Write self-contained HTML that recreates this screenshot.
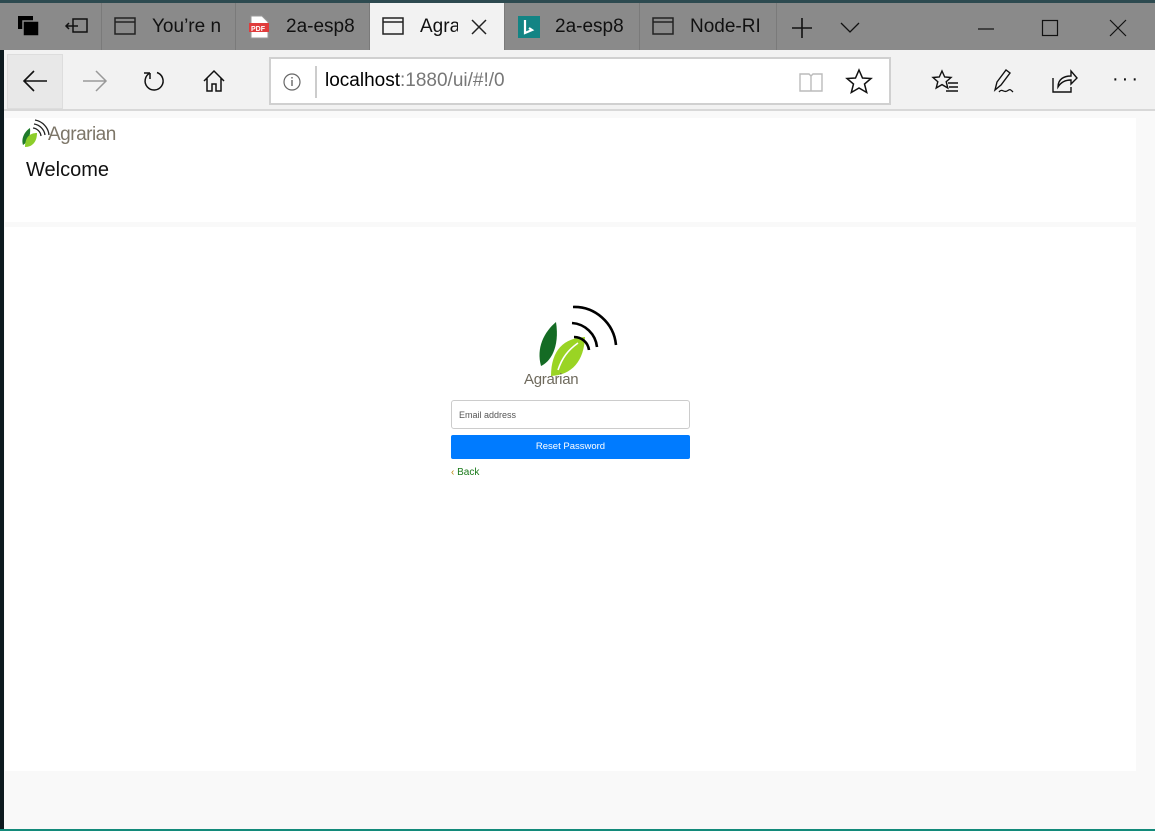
<!DOCTYPE html>
<html><head><meta charset="utf-8"><style>
*{box-sizing:border-box;margin:0;padding:0}
body{width:1155px;height:831px;overflow:hidden;position:relative;background:#f9f9f9;font-family:"Liberation Sans",sans-serif}
.abs{position:absolute}
.tabbar{left:0;top:0;width:1155px;height:50px;background:#8a8a8a}
.tab{top:3px;height:47px;border-right:1px solid #7a7a7a;color:#111;font-size:19px;line-height:47px}
.toolbar{left:4px;top:50px;width:1151px;height:61px;background:#f2f2f2;border-bottom:2px solid #d8d8d8}
svg{position:absolute;overflow:visible}
</style></head><body>
<div class="abs" style="left:0;top:0;width:4px;height:831px;background:#0d1a1f"></div>
<div class="abs tabbar"></div>
<div class="abs" style="left:0;top:0;width:1155px;height:3px;background:#2d4a50"></div>
<svg style="left:18px;top:16px" width="24" height="24"><rect x="0" y="0" width="15" height="13" fill="#000"/><rect x="5" y="5" width="16" height="15" fill="#000" stroke="#8a8a8a" stroke-width="1.5"/></svg>
<svg style="left:64px;top:18px" width="26" height="18"><rect x="9" y="1" width="14" height="13" fill="none" stroke="#111" stroke-width="1.5"/><path d="M2 8h12M5 5l-3 3 3 3" fill="none" stroke="#111" stroke-width="1.5"/></svg>
<div class="abs tab" style="left:101px;width:135px;border-left:1px solid #7a7a7a"><svg style="left:12px;top:14px" width="22" height="18"><rect x="1" y="1" width="20" height="16" fill="none" stroke="#222" stroke-width="1.5"/><path d="M1 5h20" stroke="#222" stroke-width="1.5"/></svg><span style="position:absolute;left:50px">You’re n</span></div>
<div class="abs tab" style="left:236px;width:134px"><svg style="left:12px;top:12px" width="22" height="24"><path d="M3 1h11l6 6v16H3z" fill="#fff" stroke="#999"/><rect x="1" y="8" width="20" height="9" fill="#e03c3c"/><text x="3" y="16" font-size="7" fill="#fff" font-weight="bold" font-family="Liberation Sans">PDF</text></svg><span style="position:absolute;left:50px">2a-esp8</span></div>
<div class="abs tab" style="left:370px;width:135px;background:#f2f2f2;top:3px;height:48px"><svg style="left:12px;top:14px" width="22" height="18"><rect x="1" y="1" width="20" height="16" fill="none" stroke="#222" stroke-width="1.5"/><path d="M1 5h20" stroke="#222" stroke-width="1.5"/></svg><span style="position:absolute;left:50px;width:38px;overflow:hidden">Agrarian</span><svg style="left:101px;top:16px" width="16" height="16"><path d="M1 1l14 14M15 1L1 15" stroke="#222" stroke-width="1.5"/></svg></div>
<div class="abs tab" style="left:505px;width:135px"><svg style="left:13px;top:13px" width="22" height="22"><rect width="22" height="22" fill="#138484"/><path d="M7 4v13l7-3-3-2" fill="none" stroke="#fff" stroke-width="2.2"/></svg><span style="position:absolute;left:50px">2a-esp8</span></div>
<div class="abs tab" style="left:640px;width:137px"><svg style="left:12px;top:14px" width="22" height="18"><rect x="1" y="1" width="20" height="16" fill="none" stroke="#222" stroke-width="1.5"/><path d="M1 5h20" stroke="#222" stroke-width="1.5"/></svg><span style="position:absolute;left:50px">Node-RI</span></div>
<svg style="left:792px;top:18px" width="20" height="20"><path d="M10 0v20M0 10h20" stroke="#111" stroke-width="1.6"/></svg>
<svg style="left:840px;top:22px" width="20" height="12"><path d="M1 1l9 9 9-9" fill="none" stroke="#111" stroke-width="1.3"/></svg>
<svg style="left:978px;top:28px" width="16" height="2"><path d="M0 1h16" stroke="#111" stroke-width="1.2"/></svg>
<svg style="left:1042px;top:20px" width="16" height="16"><rect x="0.5" y="0.5" width="15" height="15" fill="none" stroke="#111" stroke-width="1.2"/></svg>
<svg style="left:1110px;top:20px" width="16" height="16"><path d="M0 0l16 16M16 0L0 16" stroke="#111" stroke-width="1.2"/></svg>
<div class="abs toolbar"></div>
<div class="abs" style="left:7px;top:54px;width:56px;height:55px;background:#e8e8e8;border:1px solid #ddd"></div>
<svg style="left:23px;top:70px" width="24" height="22"><path d="M1 11h23M11 1L1 11l10 10" fill="none" stroke="#111" stroke-width="1.6"/></svg>
<svg style="left:83px;top:70px" width="24" height="22"><path d="M0 11h23M13 1l10 10-10 10" fill="none" stroke="#999" stroke-width="1.5"/></svg>
<svg style="left:143px;top:70px" width="22" height="22"><path d="M7 3A9 9 0 1 0 14 2.5M7 3V9M7 3H1" fill="none" stroke="#111" stroke-width="1.5"/></svg>
<svg style="left:203px;top:70px" width="22" height="22"><path d="M1 11L11 1l10 10M4 8v13h5v-7h4v7h5V8" fill="none" stroke="#111" stroke-width="1.5"/></svg>
<div class="abs" style="left:269px;top:57px;width:622px;height:48px;background:#fff;border:2px solid #d0d0d0"></div>
<svg style="left:283px;top:73px" width="18" height="18"><circle cx="9" cy="9" r="8" fill="none" stroke="#666" stroke-width="1.2"/><path d="M9 7v6M9 4v1.5" stroke="#666" stroke-width="1.4"/></svg>
<div class="abs" style="left:315px;top:66px;width:2px;height:32px;background:#ccc"></div>
<div class="abs" style="left:325px;top:70px;font-size:19px;color:#000">localhost<span style="color:#777">:1880/ui/#!/0</span></div>
<svg style="left:799px;top:72px" width="24" height="20"><path d="M1 2h9l2 2 2-2h9v17H1zM12 4v15" fill="none" stroke="#bbb" stroke-width="1.4"/></svg>
<svg style="left:846px;top:69px" width="26" height="26"><path d="M13 1l3.5 8 8.5.5-6.5 5.5 2.2 8.5L13 19l-7.7 4.5 2.2-8.5L1 9.5 9.5 9z" fill="none" stroke="#111" stroke-width="1.5"/></svg>
<svg style="left:932px;top:70px" width="28" height="24"><path d="M10 1l2.7 6 6.3.5-4.8 4.2 1.6 6.3L10 14.6 4.2 18l1.6-6.3L1 7.5l6.3-.5z" fill="none" stroke="#111" stroke-width="1.4"/><path d="M16 13h10M17 17h9M14 21h12" stroke="#111" stroke-width="1.4"/></svg>
<svg style="left:992px;top:68px" width="28" height="28"><path d="M3 22l2-8 9-12 4 3-9 12z" fill="none" stroke="#111" stroke-width="1.4"/><path d="M7 24c3-4 5 1 8-1s3-2 6 1" fill="none" stroke="#111" stroke-width="1.3"/></svg>
<svg style="left:1051px;top:68px" width="28" height="26"><path d="M2 10v14h18v-5" fill="none" stroke="#111" stroke-width="1.4"/><path d="M7 19c0-8 6-11 13-11V3l6 7-6 6v-4c-6 0-10 2-13 7z" fill="none" stroke="#111" stroke-width="1.4"/></svg>
<div class="abs" style="left:1112px;top:68px;font-size:20px;letter-spacing:3px;color:#111">···</div>
<div class="abs" style="left:4px;top:112px;width:1151px;height:717px;background:#f9f9f9"></div>
<div class="abs" style="left:5px;top:118px;width:1131px;height:104px;background:#fff"></div>
<div class="abs" style="left:5px;top:227px;width:1131px;height:544px;background:#fff"></div>
<div class="abs" style="left:0;top:829px;width:1155px;height:2px;background:#138a7a"></div>
<!-- small logo -->
<svg style="left:20px;top:120px" width="30" height="30"><path d="M10 8C4 12 1 19 3 25 8 22 11 15 10 8z" fill="#1e7a2a"/><path d="M17 13C10 13 5 17 5 27 13 27 17 21 17 13z" fill="#8ccd2a"/><path d="M13 8a9 9 0 0 1 8 8M14 4a13 13 0 0 1 11 11M15 0a17 17 0 0 1 14 15" fill="none" stroke="#222" stroke-width="1.3"/></svg>
<div class="abs" style="left:48px;top:124px;font-size:19px;color:#7d7668;letter-spacing:-0.5px">Agrarian</div>
<div class="abs" style="left:26px;top:159px;font-size:20px;color:#111">Welcome</div>
<!-- big logo -->
<svg style="left:520px;top:300px" width="110" height="92"><path d="M36 22C24 32 16 48 21 66 30 62 40 48 36 22z" fill="#146b24"/><path d="M65 37C44 38 31 50 31 76 52 75 64 61 65 37z" fill="#9ad424"/><path d="M38 70c4-12 10-20 20-27" fill="none" stroke="#fff" stroke-width="1.6"/><path d="M54 37a15 15 0 0 1 15 13M52 23a27 27 0 0 1 25 24M53 7a42 42 0 0 1 43 38" fill="none" stroke="#000" stroke-width="2.6"/></svg>
<div class="abs" style="left:524px;top:371px;font-size:15px;color:#6f6a5d;letter-spacing:-0.3px">Agrarian</div>
<div class="abs" style="left:451px;top:400px;width:239px;height:29px;border:1px solid #ccc;border-radius:3px;background:#fff;font-size:9px;color:#555;padding:9px 0 0 7px">Email address</div>
<div class="abs" style="left:451px;top:435px;width:239px;height:24px;background:#007bff;border-radius:2px;color:#fff;font-size:9.5px;text-align:center;line-height:24px">Reset Password</div>
<div class="abs" style="left:451px;top:467px;font-size:10px;color:#1a7a1a"><span style="color:#b8860b">‹</span> Back</div>
</body></html>
